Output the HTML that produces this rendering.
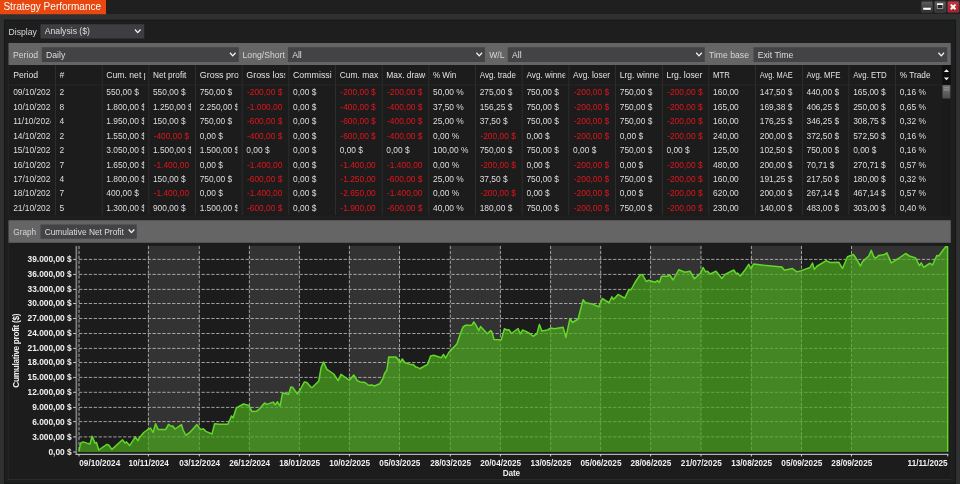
<!DOCTYPE html>
<html lang="en"><head><meta charset="utf-8"><title>Strategy Performance</title>
<style>
html,body{margin:0;padding:0}
body{width:960px;height:484px;overflow:hidden;background:#2f3031;font-family:"Liberation Sans",Arial,sans-serif;font-size:8.64px;color:#dcdcdc;position:relative}
div{position:absolute;box-sizing:border-box}
.titlebar{left:0;top:0;width:960px;height:13.9px;background:#1f1f1f}
.tab{left:0;top:0;width:106px;height:14.3px;background:#e8470f;color:#fff;font-size:10.05px;line-height:13.7px;padding-left:3.4px;white-space:nowrap}
.wb{top:1.1px;width:11.6px;height:11.4px;border-radius:1.5px;border:0.7px solid #565656;background:linear-gradient(#5c5c5c,#303030)}
.wb svg{position:absolute;left:-.7px;top:-.7px}
.panel{left:4px;top:19.8px;width:952px;height:464px;background:#1e1e1e;border:0.8px solid #141414}
.lbl{white-space:nowrap;color:#d6d6d6}
.sel{background:#434346;color:#dedede;white-space:nowrap;padding-left:4.2px}
.chev{position:absolute}
.grp{left:8.05px;width:943.1px;background:#1c1c1c;border-left:.7px solid #2b2b2b;border-right:.7px solid #2b2b2b}
.bar{left:0;top:0;width:100%;background:#656565}
.thead{left:0;top:0;width:933.4px;height:20.2px;border-bottom:0.7px solid #303030}
.th,.td{top:0;height:100%;overflow:hidden;white-space:nowrap;border-right:0.8px solid #333}
.th span,.td span{position:absolute;left:3.8px;right:4.2px;top:0;overflow:hidden;white-space:nowrap}
.c0 span{left:4.6px}
.th i{display:inline-block;font-style:normal;transform-origin:0 50%;white-space:nowrap}
.neg span{padding-left:.7px}
.th{line-height:20.4px;color:#e2e2e2}
.th span{height:19px;right:3.2px}
.tr{left:0;width:933.4px;height:14.42px;line-height:14.6px;color:#dedede;font-size:8.38px}
.td span{height:14.4px}
.neg{color:#e2151b}
.chart{position:absolute;left:0;top:0}
.g{stroke:#d4d4d4;stroke-width:.72;stroke-dasharray:3.3 1.6}
.al{font-family:"Liberation Sans",Arial,sans-serif;font-weight:bold;font-size:8.18px;fill:#f0f0f0}
.at{font-family:"Liberation Sans",Arial,sans-serif;font-weight:bold;font-size:8.2px;fill:#ececec}
</style></head><body>
<div id="w" style="left:0;top:0;width:3840px;height:1936px;transform:scale(.25);transform-origin:0 0;filter:contrast(1)">
<div id="z" style="left:0;top:0;width:960px;height:484px;zoom:4">
<div class="titlebar"></div>
<div class="tab">Strategy Performance</div>
<div class="wb" style="left:921.2px"><svg width="12" height="11.4" viewBox="0 0 12 11.4"><rect x="2.2" y="6.7" width="7.6" height="2.1" fill="#fff"/></svg></div>
<div class="wb" style="left:934.4px;border-color:#6c6c6c"><svg width="12" height="11.4" viewBox="0 0 12 11.4"><rect x="3.1" y="3.6" width="5.4" height="4" fill="#262626" stroke="#a8a8a8" stroke-width=".8"/><rect x="2.7" y="2.3" width="6.2" height="1.6" fill="#fff"/></svg></div>
<div class="wb" style="left:947.6px;background:linear-gradient(#c43a44,#a81d27);border-color:#b8434c"><svg width="12" height="11.4" viewBox="0 0 12 11.4"><path d="M3.3 3.6 L8 8.3 M8 3.6 L3.3 8.3" stroke="#fff" stroke-width="2" fill="none"/></svg></div>
<div class="panel"></div>
<div class="lbl" style="left:8.5px;top:26.5px;line-height:10px">Display</div>
<div class="sel" style="background:#3e3e42;left:40.6px;top:24.3px;width:103.6px;height:14.2px;line-height:14px">Analysis ($)<svg class="chev" style="right:2.9px;top:4.5px" viewBox="0 0 12 8" width="7" height="4.9"><path d="M1.2 1.2 L6 6.4 L10.8 1.2" fill="none" stroke="#f2f2f2" stroke-width="2.3"/></svg></div>

<div class="grp" style="top:43.1px;height:172.8px">
 <div class="bar" style="height:21.9px">
  <div class="lbl" style="left:4.5px;top:6.6px;line-height:10px">Period</div>
  <div class="sel" style="left:33.3px;top:4.2px;width:196.8px;height:14.6px;line-height:15.6px">Daily<svg class="chev" style="right:2.3px;top:4.7px" viewBox="0 0 12 8" width="7" height="4.9"><path d="M1.2 1.2 L6 6.4 L10.8 1.2" fill="none" stroke="#f2f2f2" stroke-width="2.3"/></svg></div>
  <div class="lbl" style="left:234px;top:6.6px;line-height:10px">Long/Short</div>
  <div class="sel" style="left:279.4px;top:4.2px;width:197px;height:14.6px;line-height:15.6px">All<svg class="chev" style="right:2.3px;top:4.7px" viewBox="0 0 12 8" width="7" height="4.9"><path d="M1.2 1.2 L6 6.4 L10.8 1.2" fill="none" stroke="#f2f2f2" stroke-width="2.3"/></svg></div>
  <div class="lbl" style="left:480.6px;top:6.6px;line-height:10px">W/L</div>
  <div class="sel" style="left:499.3px;top:4.2px;width:197px;height:14.6px;line-height:15.6px">All<svg class="chev" style="right:2.3px;top:4.7px" viewBox="0 0 12 8" width="7" height="4.9"><path d="M1.2 1.2 L6 6.4 L10.8 1.2" fill="none" stroke="#f2f2f2" stroke-width="2.3"/></svg></div>
  <div class="lbl" style="left:700.4px;top:6.6px;line-height:10px">Time base</div>
  <div class="sel" style="left:745px;top:4.2px;width:193.6px;height:14.6px;line-height:15.6px">Exit Time<svg class="chev" style="right:2.3px;top:4.7px" viewBox="0 0 12 8" width="7" height="4.9"><path d="M1.2 1.2 L6 6.4 L10.8 1.2" fill="none" stroke="#f2f2f2" stroke-width="2.3"/></svg></div>
 </div>
 <div style="left:0;top:21.9px;width:100%;height:150.9px;overflow:hidden">
<div class="thead">
<div class="th c0" style="left:0px;width:47.25px"><span>Period</span></div>
<div class="th" style="left:47.25px;width:46.68px"><span>#</span></div>
<div class="th" style="left:93.93px;width:46.68px"><span>Cum. net profit</span></div>
<div class="th" style="left:140.61px;width:46.68px"><span><i style="transform:scaleX(0.95)">Net profit</i></span></div>
<div class="th" style="left:187.29px;width:46.68px"><span><i style="transform:scaleX(1.035)">Gross profit</i></span></div>
<div class="th" style="left:233.97px;width:46.68px"><span><i style="transform:scaleX(1.03)">Gross loss</i></span></div>
<div class="th" style="left:280.65px;width:46.68px"><span><i style="transform:scaleX(1.02)">Commission</i></span></div>
<div class="th" style="left:327.33px;width:46.68px"><span><i style="transform:scaleX(0.975)">Cum. max. drawdown</i></span></div>
<div class="th" style="left:374.01px;width:46.68px"><span><i style="transform:scaleX(0.975)">Max. drawdown</i></span></div>
<div class="th" style="left:420.69px;width:46.68px"><span><i style="transform:scaleX(0.93)">% Win</i></span></div>
<div class="th" style="left:467.37px;width:46.68px"><span><i style="transform:scaleX(0.92)">Avg. trade</i></span></div>
<div class="th" style="left:514.05px;width:46.68px"><span><i style="transform:scaleX(0.95)">Avg. winner</i></span></div>
<div class="th" style="left:560.73px;width:46.68px"><span><i style="transform:scaleX(0.97)">Avg. loser</i></span></div>
<div class="th" style="left:607.41px;width:46.68px"><span><i style="transform:scaleX(0.99)">Lrg. winner</i></span></div>
<div class="th" style="left:654.09px;width:46.68px"><span>Lrg. loser</span></div>
<div class="th" style="left:700.77px;width:46.68px"><span><i style="transform:scaleX(0.9)">MTR</i></span></div>
<div class="th" style="left:747.45px;width:46.68px"><span><i style="transform:scaleX(0.86)">Avg. MAE</i></span></div>
<div class="th" style="left:794.13px;width:46.68px"><span><i style="transform:scaleX(0.9)">Avg. MFE</i></span></div>
<div class="th" style="left:840.81px;width:46.68px"><span><i style="transform:scaleX(0.91)">Avg. ETD</i></span></div>
<div class="th" style="left:887.49px;width:46.68px"><span><i style="transform:scaleX(0.955)">% Trade</i></span></div>
</div>
<div class="tr" style="top:20.3px">
<div class="td c0" style="left:0px;width:47.25px"><span>09/10/2024</span></div>
<div class="td" style="left:47.25px;width:46.68px"><span>2</span></div>
<div class="td" style="left:93.93px;width:46.68px"><span>550,00 $</span></div>
<div class="td" style="left:140.61px;width:46.68px"><span>550,00 $</span></div>
<div class="td" style="left:187.29px;width:46.68px"><span>750,00 $</span></div>
<div class="td neg" style="left:233.97px;width:46.68px"><span>-200,00 $</span></div>
<div class="td" style="left:280.65px;width:46.68px"><span>0,00 $</span></div>
<div class="td neg" style="left:327.33px;width:46.68px"><span>-200,00 $</span></div>
<div class="td neg" style="left:374.01px;width:46.68px"><span>-200,00 $</span></div>
<div class="td" style="left:420.69px;width:46.68px"><span>50,00 %</span></div>
<div class="td" style="left:467.37px;width:46.68px"><span>275,00 $</span></div>
<div class="td" style="left:514.05px;width:46.68px"><span>750,00 $</span></div>
<div class="td neg" style="left:560.73px;width:46.68px"><span>-200,00 $</span></div>
<div class="td" style="left:607.41px;width:46.68px"><span>750,00 $</span></div>
<div class="td neg" style="left:654.09px;width:46.68px"><span>-200,00 $</span></div>
<div class="td" style="left:700.77px;width:46.68px"><span>160,00</span></div>
<div class="td" style="left:747.45px;width:46.68px"><span>147,50 $</span></div>
<div class="td" style="left:794.13px;width:46.68px"><span>440,00 $</span></div>
<div class="td" style="left:840.81px;width:46.68px"><span>165,00 $</span></div>
<div class="td" style="left:887.49px;width:46.68px"><span>0,16 %</span></div>
</div>
<div class="tr" style="top:34.72px">
<div class="td c0" style="left:0px;width:47.25px"><span>10/10/2024</span></div>
<div class="td" style="left:47.25px;width:46.68px"><span>8</span></div>
<div class="td" style="left:93.93px;width:46.68px"><span>1.800,00 $</span></div>
<div class="td" style="left:140.61px;width:46.68px"><span>1.250,00 $</span></div>
<div class="td" style="left:187.29px;width:46.68px"><span>2.250,00 $</span></div>
<div class="td neg" style="left:233.97px;width:46.68px"><span>-1.000,00 $</span></div>
<div class="td" style="left:280.65px;width:46.68px"><span>0,00 $</span></div>
<div class="td neg" style="left:327.33px;width:46.68px"><span>-400,00 $</span></div>
<div class="td neg" style="left:374.01px;width:46.68px"><span>-400,00 $</span></div>
<div class="td" style="left:420.69px;width:46.68px"><span>37,50 %</span></div>
<div class="td" style="left:467.37px;width:46.68px"><span>156,25 $</span></div>
<div class="td" style="left:514.05px;width:46.68px"><span>750,00 $</span></div>
<div class="td neg" style="left:560.73px;width:46.68px"><span>-200,00 $</span></div>
<div class="td" style="left:607.41px;width:46.68px"><span>750,00 $</span></div>
<div class="td neg" style="left:654.09px;width:46.68px"><span>-200,00 $</span></div>
<div class="td" style="left:700.77px;width:46.68px"><span>165,00</span></div>
<div class="td" style="left:747.45px;width:46.68px"><span>169,38 $</span></div>
<div class="td" style="left:794.13px;width:46.68px"><span>406,25 $</span></div>
<div class="td" style="left:840.81px;width:46.68px"><span>250,00 $</span></div>
<div class="td" style="left:887.49px;width:46.68px"><span>0,65 %</span></div>
</div>
<div class="tr" style="top:49.14px">
<div class="td c0" style="left:0px;width:47.25px"><span>11/10/2024</span></div>
<div class="td" style="left:47.25px;width:46.68px"><span>4</span></div>
<div class="td" style="left:93.93px;width:46.68px"><span>1.950,00 $</span></div>
<div class="td" style="left:140.61px;width:46.68px"><span>150,00 $</span></div>
<div class="td" style="left:187.29px;width:46.68px"><span>750,00 $</span></div>
<div class="td neg" style="left:233.97px;width:46.68px"><span>-600,00 $</span></div>
<div class="td" style="left:280.65px;width:46.68px"><span>0,00 $</span></div>
<div class="td neg" style="left:327.33px;width:46.68px"><span>-600,00 $</span></div>
<div class="td neg" style="left:374.01px;width:46.68px"><span>-400,00 $</span></div>
<div class="td" style="left:420.69px;width:46.68px"><span>25,00 %</span></div>
<div class="td" style="left:467.37px;width:46.68px"><span>37,50 $</span></div>
<div class="td" style="left:514.05px;width:46.68px"><span>750,00 $</span></div>
<div class="td neg" style="left:560.73px;width:46.68px"><span>-200,00 $</span></div>
<div class="td" style="left:607.41px;width:46.68px"><span>750,00 $</span></div>
<div class="td neg" style="left:654.09px;width:46.68px"><span>-200,00 $</span></div>
<div class="td" style="left:700.77px;width:46.68px"><span>160,00</span></div>
<div class="td" style="left:747.45px;width:46.68px"><span>176,25 $</span></div>
<div class="td" style="left:794.13px;width:46.68px"><span>346,25 $</span></div>
<div class="td" style="left:840.81px;width:46.68px"><span>308,75 $</span></div>
<div class="td" style="left:887.49px;width:46.68px"><span>0,32 %</span></div>
</div>
<div class="tr" style="top:63.56px">
<div class="td c0" style="left:0px;width:47.25px"><span>14/10/2024</span></div>
<div class="td" style="left:47.25px;width:46.68px"><span>2</span></div>
<div class="td" style="left:93.93px;width:46.68px"><span>1.550,00 $</span></div>
<div class="td neg" style="left:140.61px;width:46.68px"><span>-400,00 $</span></div>
<div class="td" style="left:187.29px;width:46.68px"><span>0,00 $</span></div>
<div class="td neg" style="left:233.97px;width:46.68px"><span>-400,00 $</span></div>
<div class="td" style="left:280.65px;width:46.68px"><span>0,00 $</span></div>
<div class="td neg" style="left:327.33px;width:46.68px"><span>-600,00 $</span></div>
<div class="td neg" style="left:374.01px;width:46.68px"><span>-400,00 $</span></div>
<div class="td" style="left:420.69px;width:46.68px"><span>0,00 %</span></div>
<div class="td neg" style="left:467.37px;width:46.68px"><span>-200,00 $</span></div>
<div class="td" style="left:514.05px;width:46.68px"><span>0,00 $</span></div>
<div class="td neg" style="left:560.73px;width:46.68px"><span>-200,00 $</span></div>
<div class="td" style="left:607.41px;width:46.68px"><span>0,00 $</span></div>
<div class="td neg" style="left:654.09px;width:46.68px"><span>-200,00 $</span></div>
<div class="td" style="left:700.77px;width:46.68px"><span>240,00</span></div>
<div class="td" style="left:747.45px;width:46.68px"><span>200,00 $</span></div>
<div class="td" style="left:794.13px;width:46.68px"><span>372,50 $</span></div>
<div class="td" style="left:840.81px;width:46.68px"><span>572,50 $</span></div>
<div class="td" style="left:887.49px;width:46.68px"><span>0,16 %</span></div>
</div>
<div class="tr" style="top:77.98px">
<div class="td c0" style="left:0px;width:47.25px"><span>15/10/2024</span></div>
<div class="td" style="left:47.25px;width:46.68px"><span>2</span></div>
<div class="td" style="left:93.93px;width:46.68px"><span>3.050,00 $</span></div>
<div class="td" style="left:140.61px;width:46.68px"><span>1.500,00 $</span></div>
<div class="td" style="left:187.29px;width:46.68px"><span>1.500,00 $</span></div>
<div class="td" style="left:233.97px;width:46.68px"><span>0,00 $</span></div>
<div class="td" style="left:280.65px;width:46.68px"><span>0,00 $</span></div>
<div class="td" style="left:327.33px;width:46.68px"><span>0,00 $</span></div>
<div class="td" style="left:374.01px;width:46.68px"><span>0,00 $</span></div>
<div class="td" style="left:420.69px;width:46.68px"><span>100,00 %</span></div>
<div class="td" style="left:467.37px;width:46.68px"><span>750,00 $</span></div>
<div class="td" style="left:514.05px;width:46.68px"><span>750,00 $</span></div>
<div class="td" style="left:560.73px;width:46.68px"><span>0,00 $</span></div>
<div class="td" style="left:607.41px;width:46.68px"><span>750,00 $</span></div>
<div class="td" style="left:654.09px;width:46.68px"><span>0,00 $</span></div>
<div class="td" style="left:700.77px;width:46.68px"><span>125,00</span></div>
<div class="td" style="left:747.45px;width:46.68px"><span>102,50 $</span></div>
<div class="td" style="left:794.13px;width:46.68px"><span>750,00 $</span></div>
<div class="td" style="left:840.81px;width:46.68px"><span>0,00 $</span></div>
<div class="td" style="left:887.49px;width:46.68px"><span>0,16 %</span></div>
</div>
<div class="tr" style="top:92.4px">
<div class="td c0" style="left:0px;width:47.25px"><span>16/10/2024</span></div>
<div class="td" style="left:47.25px;width:46.68px"><span>7</span></div>
<div class="td" style="left:93.93px;width:46.68px"><span>1.650,00 $</span></div>
<div class="td neg" style="left:140.61px;width:46.68px"><span>-1.400,00 $</span></div>
<div class="td" style="left:187.29px;width:46.68px"><span>0,00 $</span></div>
<div class="td neg" style="left:233.97px;width:46.68px"><span>-1.400,00 $</span></div>
<div class="td" style="left:280.65px;width:46.68px"><span>0,00 $</span></div>
<div class="td neg" style="left:327.33px;width:46.68px"><span>-1.400,00 $</span></div>
<div class="td neg" style="left:374.01px;width:46.68px"><span>-1.400,00 $</span></div>
<div class="td" style="left:420.69px;width:46.68px"><span>0,00 %</span></div>
<div class="td neg" style="left:467.37px;width:46.68px"><span>-200,00 $</span></div>
<div class="td" style="left:514.05px;width:46.68px"><span>0,00 $</span></div>
<div class="td neg" style="left:560.73px;width:46.68px"><span>-200,00 $</span></div>
<div class="td" style="left:607.41px;width:46.68px"><span>0,00 $</span></div>
<div class="td neg" style="left:654.09px;width:46.68px"><span>-200,00 $</span></div>
<div class="td" style="left:700.77px;width:46.68px"><span>480,00</span></div>
<div class="td" style="left:747.45px;width:46.68px"><span>200,00 $</span></div>
<div class="td" style="left:794.13px;width:46.68px"><span>70,71 $</span></div>
<div class="td" style="left:840.81px;width:46.68px"><span>270,71 $</span></div>
<div class="td" style="left:887.49px;width:46.68px"><span>0,57 %</span></div>
</div>
<div class="tr" style="top:106.82px">
<div class="td c0" style="left:0px;width:47.25px"><span>17/10/2024</span></div>
<div class="td" style="left:47.25px;width:46.68px"><span>4</span></div>
<div class="td" style="left:93.93px;width:46.68px"><span>1.800,00 $</span></div>
<div class="td" style="left:140.61px;width:46.68px"><span>150,00 $</span></div>
<div class="td" style="left:187.29px;width:46.68px"><span>750,00 $</span></div>
<div class="td neg" style="left:233.97px;width:46.68px"><span>-600,00 $</span></div>
<div class="td" style="left:280.65px;width:46.68px"><span>0,00 $</span></div>
<div class="td neg" style="left:327.33px;width:46.68px"><span>-1.250,00 $</span></div>
<div class="td neg" style="left:374.01px;width:46.68px"><span>-600,00 $</span></div>
<div class="td" style="left:420.69px;width:46.68px"><span>25,00 %</span></div>
<div class="td" style="left:467.37px;width:46.68px"><span>37,50 $</span></div>
<div class="td" style="left:514.05px;width:46.68px"><span>750,00 $</span></div>
<div class="td neg" style="left:560.73px;width:46.68px"><span>-200,00 $</span></div>
<div class="td" style="left:607.41px;width:46.68px"><span>750,00 $</span></div>
<div class="td neg" style="left:654.09px;width:46.68px"><span>-200,00 $</span></div>
<div class="td" style="left:700.77px;width:46.68px"><span>160,00</span></div>
<div class="td" style="left:747.45px;width:46.68px"><span>191,25 $</span></div>
<div class="td" style="left:794.13px;width:46.68px"><span>217,50 $</span></div>
<div class="td" style="left:840.81px;width:46.68px"><span>180,00 $</span></div>
<div class="td" style="left:887.49px;width:46.68px"><span>0,32 %</span></div>
</div>
<div class="tr" style="top:121.24px">
<div class="td c0" style="left:0px;width:47.25px"><span>18/10/2024</span></div>
<div class="td" style="left:47.25px;width:46.68px"><span>7</span></div>
<div class="td" style="left:93.93px;width:46.68px"><span>400,00 $</span></div>
<div class="td neg" style="left:140.61px;width:46.68px"><span>-1.400,00 $</span></div>
<div class="td" style="left:187.29px;width:46.68px"><span>0,00 $</span></div>
<div class="td neg" style="left:233.97px;width:46.68px"><span>-1.400,00 $</span></div>
<div class="td" style="left:280.65px;width:46.68px"><span>0,00 $</span></div>
<div class="td neg" style="left:327.33px;width:46.68px"><span>-2.650,00 $</span></div>
<div class="td neg" style="left:374.01px;width:46.68px"><span>-1.400,00 $</span></div>
<div class="td" style="left:420.69px;width:46.68px"><span>0,00 %</span></div>
<div class="td neg" style="left:467.37px;width:46.68px"><span>-200,00 $</span></div>
<div class="td" style="left:514.05px;width:46.68px"><span>0,00 $</span></div>
<div class="td neg" style="left:560.73px;width:46.68px"><span>-200,00 $</span></div>
<div class="td" style="left:607.41px;width:46.68px"><span>0,00 $</span></div>
<div class="td neg" style="left:654.09px;width:46.68px"><span>-200,00 $</span></div>
<div class="td" style="left:700.77px;width:46.68px"><span>620,00</span></div>
<div class="td" style="left:747.45px;width:46.68px"><span>200,00 $</span></div>
<div class="td" style="left:794.13px;width:46.68px"><span>267,14 $</span></div>
<div class="td" style="left:840.81px;width:46.68px"><span>467,14 $</span></div>
<div class="td" style="left:887.49px;width:46.68px"><span>0,57 %</span></div>
</div>
<div class="tr" style="top:135.66px">
<div class="td c0" style="left:0px;width:47.25px"><span>21/10/2024</span></div>
<div class="td" style="left:47.25px;width:46.68px"><span>5</span></div>
<div class="td" style="left:93.93px;width:46.68px"><span>1.300,00 $</span></div>
<div class="td" style="left:140.61px;width:46.68px"><span>900,00 $</span></div>
<div class="td" style="left:187.29px;width:46.68px"><span>1.500,00 $</span></div>
<div class="td neg" style="left:233.97px;width:46.68px"><span>-600,00 $</span></div>
<div class="td" style="left:280.65px;width:46.68px"><span>0,00 $</span></div>
<div class="td neg" style="left:327.33px;width:46.68px"><span>-1.900,00 $</span></div>
<div class="td neg" style="left:374.01px;width:46.68px"><span>-600,00 $</span></div>
<div class="td" style="left:420.69px;width:46.68px"><span>40,00 %</span></div>
<div class="td" style="left:467.37px;width:46.68px"><span>180,00 $</span></div>
<div class="td" style="left:514.05px;width:46.68px"><span>750,00 $</span></div>
<div class="td neg" style="left:560.73px;width:46.68px"><span>-200,00 $</span></div>
<div class="td" style="left:607.41px;width:46.68px"><span>750,00 $</span></div>
<div class="td neg" style="left:654.09px;width:46.68px"><span>-200,00 $</span></div>
<div class="td" style="left:700.77px;width:46.68px"><span>230,00</span></div>
<div class="td" style="left:747.45px;width:46.68px"><span>140,00 $</span></div>
<div class="td" style="left:794.13px;width:46.68px"><span>483,00 $</span></div>
<div class="td" style="left:840.81px;width:46.68px"><span>303,00 $</span></div>
<div class="td" style="left:887.49px;width:46.68px"><span>0,40 %</span></div>
</div>
  <div style="left:933.4px;top:0;width:9px;height:150.9px;background:#1a1a1a"></div>
  <div style="left:933.4px;top:0;width:9px;height:19.4px;background:#0f0f0f"><svg width="9" height="19.4" viewBox="0 0 9 19.4" style="position:absolute;left:0;top:0"><path d="M1.9 7 L4.5 4.3 L7.1 7 Z M1.9 12.4 L4.5 15.2 L7.1 12.4 Z" fill="#f4f4f4"/></svg></div>
  <div style="left:933.9px;top:20.3px;width:8px;height:13.3px;background:linear-gradient(#747474,#4e4e4e);border-top:0.7px solid #999"><div style="left:1.2px;top:1.6px;width:5.6px;height:.6px;background:#a5a5a5"></div><div style="left:1.2px;top:3px;width:5.6px;height:.6px;background:#a0a0a0"></div><div style="left:1.2px;top:4.4px;width:5.6px;height:.6px;background:#989898"></div></div>
 </div>
</div>

<div class="grp" style="top:220.2px;height:259.8px;border-bottom:0.7px solid #3a3a3a">
 <div class="bar" style="height:22.5px">
  <div class="lbl" style="left:4.7px;top:6.9px;line-height:10px;font-size:8.25px">Graph</div>
  <div class="sel" style="left:31.9px;top:4.2px;width:96.4px;height:14.3px;line-height:15.4px;font-size:8.38px">Cumulative Net Profit<svg class="chev" style="right:1.9px;top:4.4px" viewBox="0 0 12 8" width="7" height="4.9"><path d="M1.2 1.2 L6 6.4 L10.8 1.2" fill="none" stroke="#f2f2f2" stroke-width="2.3"/></svg></div>
 </div>
</div>
</div>
<svg class="chart" width="3840" height="1936" viewBox="0 0 960 484">
<defs><clipPath id="pc"><rect x="79" y="245.9" width="869.7" height="206.4"/></clipPath></defs>
<rect x="148.4" y="245.9" width="50.9" height="205.8" fill="#333333"/>
<rect x="249.4" y="245.9" width="50" height="205.8" fill="#333333"/>
<rect x="349.4" y="245.9" width="50.1" height="205.8" fill="#333333"/>
<rect x="450.3" y="245.9" width="50.1" height="205.8" fill="#333333"/>
<rect x="550.6" y="245.9" width="50.1" height="205.8" fill="#333333"/>
<rect x="650.6" y="245.9" width="50.4" height="205.8" fill="#333333"/>
<rect x="751.4" y="245.9" width="50.1" height="205.8" fill="#333333"/>
<rect x="851.5" y="245.9" width="96.2" height="205.8" fill="#333333"/>
<line x1="79" x2="947.7" y1="436.9" y2="436.9" class="g"/>
<line x1="79" x2="947.7" y1="421.6" y2="421.6" class="g"/>
<line x1="79" x2="947.7" y1="407.4" y2="407.4" class="g"/>
<line x1="79" x2="947.7" y1="392.3" y2="392.3" class="g"/>
<line x1="79" x2="947.7" y1="377.4" y2="377.4" class="g"/>
<line x1="79" x2="947.7" y1="362.5" y2="362.5" class="g"/>
<line x1="79" x2="947.7" y1="348.4" y2="348.4" class="g"/>
<line x1="79" x2="947.7" y1="333.5" y2="333.5" class="g"/>
<line x1="79" x2="947.7" y1="318.5" y2="318.5" class="g"/>
<line x1="79" x2="947.7" y1="303.5" y2="303.5" class="g"/>
<line x1="79" x2="947.7" y1="289.4" y2="289.4" class="g"/>
<line x1="79" x2="947.7" y1="274.4" y2="274.4" class="g"/>
<line x1="79" x2="947.7" y1="259.4" y2="259.4" class="g"/>
<line x1="79" x2="79" y1="245.9" y2="451.7" class="g" style="stroke:#e4e4e4"/>
<line x1="148.4" x2="148.4" y1="245.9" y2="451.7" class="g"/>
<line x1="199.3" x2="199.3" y1="245.9" y2="451.7" class="g"/>
<line x1="249.4" x2="249.4" y1="245.9" y2="451.7" class="g"/>
<line x1="299.4" x2="299.4" y1="245.9" y2="451.7" class="g"/>
<line x1="349.4" x2="349.4" y1="245.9" y2="451.7" class="g"/>
<line x1="399.5" x2="399.5" y1="245.9" y2="451.7" class="g"/>
<line x1="450.3" x2="450.3" y1="245.9" y2="451.7" class="g"/>
<line x1="500.4" x2="500.4" y1="245.9" y2="451.7" class="g"/>
<line x1="550.6" x2="550.6" y1="245.9" y2="451.7" class="g"/>
<line x1="600.7" x2="600.7" y1="245.9" y2="451.7" class="g"/>
<line x1="650.6" x2="650.6" y1="245.9" y2="451.7" class="g"/>
<line x1="701" x2="701" y1="245.9" y2="451.7" class="g"/>
<line x1="751.4" x2="751.4" y1="245.9" y2="451.7" class="g"/>
<line x1="801.5" x2="801.5" y1="245.9" y2="451.7" class="g"/>
<line x1="851.5" x2="851.5" y1="245.9" y2="451.7" class="g"/>
<path d="M78.8 451.6 L80.6 443.1 L83.1 441.9 L86.9 443.1 L90 444 L92.1 436.25 L95 443.1 L96.5 442.5 L98.75 450 L106.9 444.4 L108.75 445 L111.9 449.4 L122.5 439.75 L125 443.1 L126.5 441.9 L129.6 445.6 L135.4 436.9 L137.9 440.6 L140 436.9 L143.75 432.5 L147.5 429.75 L150.6 428.1 L153.1 432.5 L155.6 423.75 L158.1 429.4 L165.6 429.6 L168.5 424.4 L171.25 426.25 L172.75 426 L175 429 L181.5 424.6 L183.1 430 L186 435.4 L190 432.2 L196.9 424.6 L200.8 429.6 L203.3 428.8 L205.9 431.4 L212 434 L214.6 423.8 L219.6 424.2 L227.9 424.2 L231.5 416 L233.1 417.7 L236.3 407.9 L243.5 404 L249 405.4 L251.9 411.6 L256.5 411.2 L259.1 409.3 L264.5 403 L266.9 404.4 L273.1 402.1 L275.3 404.7 L277.5 401.8 L280.1 406.1 L282.5 393.1 L288.6 394.3 L290.9 387.1 L292.9 387.6 L297.3 393.9 L300 390 L304.4 381.9 L306.9 382.5 L311.25 387.5 L312.5 387.25 L318.75 381 L321 368.1 L323.4 361.9 L326.9 369.4 L333.75 374 L338.1 380.6 L341 374.4 L349.4 380.25 L353.75 375 L357.25 380.6 L360 381.9 L365 382.5 L368.5 385.25 L371.9 385 L374.4 386 L379.75 383.75 L382.5 379.4 L384.75 373.1 L386.9 370 L388.75 356.9 L395.6 356.9 L398.1 359.4 L400 362.75 L402.25 359 L404.75 362.5 L410 364.4 L413.1 364.4 L415.6 366.9 L417.5 367.25 L419.75 368.75 L427.5 364.4 L430.6 356 L433.75 355.25 L441.25 357.75 L443.5 354.4 L445.6 358.1 L448.75 352.5 L456.9 344 L460.6 333.1 L463.1 326.9 L465.6 325.25 L471.9 325.25 L473.75 321.9 L476.25 325.6 L478.75 330.6 L480.6 326.5 L487.25 333.75 L490.6 330.6 L491.9 331.9 L494 339.4 L501.25 339.75 L504.4 328.75 L506.9 330 L509 329.75 L511.5 333.5 L518.1 328.5 L520.25 334 L522.5 330 L526.9 331.9 L530 333.75 L533.1 336.25 L536.9 333.75 L539.4 324.4 L541.9 331 L547.5 330 L550.6 328.1 L554.4 328.75 L563.1 327.25 L565.9 337.5 L570 318.5 L572.5 322.5 L578.1 319 L583.1 299.75 L585.6 302.75 L592.5 304 L598.75 306.9 L602.25 298.5 L609 302.75 L611.9 296.9 L613.5 299.4 L618.1 294.4 L624.75 298.1 L629 289.4 L631 289.75 L635 282.5 L640 275 L642.25 274.4 L646.25 281.5 L648.75 280.25 L655 282.25 L657.5 280.6 L659.4 282.5 L661.5 276.25 L667.5 276.25 L669.75 275 L673.1 280 L678.75 269.75 L685 272.25 L690 271.25 L694.4 278.75 L700.6 273.1 L703.1 267.5 L705.6 271.9 L707.5 271.25 L710 274 L716 271.25 L721.9 278.5 L725 274.4 L733.75 270 L736.25 273.75 L737.5 273.1 L740.25 276 L745 270 L748.75 264.4 L751 269 L753.5 264 L763.75 265.25 L781.9 266.9 L784.4 270.25 L792.5 268.5 L796.9 271.9 L801.25 270.6 L810 267.5 L812.5 263.1 L814.4 269.4 L816.9 266.25 L826.25 260.6 L830 262.5 L838.75 262.25 L842.5 268.5 L847.5 256.8 L853.4 254.5 L855.5 257.5 L860.5 266 L862.5 261.6 L868.75 256 L871.25 250.4 L873.75 256.6 L875.6 258.25 L878.75 255.4 L884.4 254.5 L886.9 252.9 L891.25 262.9 L898.75 258.25 L905.6 253.5 L909.4 256 L915.6 257.9 L919.4 265.75 L921.25 262.9 L923.75 267.25 L930 263.25 L932.5 265 L936.9 255.4 L938.75 256 L945.6 246.8 L947.6 246.8 L947.7 452.1 L78.8 452.1 Z" fill="#4daa1e" fill-opacity="0.7"/>
<path d="M78.8 451.6 L80.6 443.1 L83.1 441.9 L86.9 443.1 L90 444 L92.1 436.25 L95 443.1 L96.5 442.5 L98.75 450 L106.9 444.4 L108.75 445 L111.9 449.4 L122.5 439.75 L125 443.1 L126.5 441.9 L129.6 445.6 L135.4 436.9 L137.9 440.6 L140 436.9 L143.75 432.5 L147.5 429.75 L150.6 428.1 L153.1 432.5 L155.6 423.75 L158.1 429.4 L165.6 429.6 L168.5 424.4 L171.25 426.25 L172.75 426 L175 429 L181.5 424.6 L183.1 430 L186 435.4 L190 432.2 L196.9 424.6 L200.8 429.6 L203.3 428.8 L205.9 431.4 L212 434 L214.6 423.8 L219.6 424.2 L227.9 424.2 L231.5 416 L233.1 417.7 L236.3 407.9 L243.5 404 L249 405.4 L251.9 411.6 L256.5 411.2 L259.1 409.3 L264.5 403 L266.9 404.4 L273.1 402.1 L275.3 404.7 L277.5 401.8 L280.1 406.1 L282.5 393.1 L288.6 394.3 L290.9 387.1 L292.9 387.6 L297.3 393.9 L300 390 L304.4 381.9 L306.9 382.5 L311.25 387.5 L312.5 387.25 L318.75 381 L321 368.1 L323.4 361.9 L326.9 369.4 L333.75 374 L338.1 380.6 L341 374.4 L349.4 380.25 L353.75 375 L357.25 380.6 L360 381.9 L365 382.5 L368.5 385.25 L371.9 385 L374.4 386 L379.75 383.75 L382.5 379.4 L384.75 373.1 L386.9 370 L388.75 356.9 L395.6 356.9 L398.1 359.4 L400 362.75 L402.25 359 L404.75 362.5 L410 364.4 L413.1 364.4 L415.6 366.9 L417.5 367.25 L419.75 368.75 L427.5 364.4 L430.6 356 L433.75 355.25 L441.25 357.75 L443.5 354.4 L445.6 358.1 L448.75 352.5 L456.9 344 L460.6 333.1 L463.1 326.9 L465.6 325.25 L471.9 325.25 L473.75 321.9 L476.25 325.6 L478.75 330.6 L480.6 326.5 L487.25 333.75 L490.6 330.6 L491.9 331.9 L494 339.4 L501.25 339.75 L504.4 328.75 L506.9 330 L509 329.75 L511.5 333.5 L518.1 328.5 L520.25 334 L522.5 330 L526.9 331.9 L530 333.75 L533.1 336.25 L536.9 333.75 L539.4 324.4 L541.9 331 L547.5 330 L550.6 328.1 L554.4 328.75 L563.1 327.25 L565.9 337.5 L570 318.5 L572.5 322.5 L578.1 319 L583.1 299.75 L585.6 302.75 L592.5 304 L598.75 306.9 L602.25 298.5 L609 302.75 L611.9 296.9 L613.5 299.4 L618.1 294.4 L624.75 298.1 L629 289.4 L631 289.75 L635 282.5 L640 275 L642.25 274.4 L646.25 281.5 L648.75 280.25 L655 282.25 L657.5 280.6 L659.4 282.5 L661.5 276.25 L667.5 276.25 L669.75 275 L673.1 280 L678.75 269.75 L685 272.25 L690 271.25 L694.4 278.75 L700.6 273.1 L703.1 267.5 L705.6 271.9 L707.5 271.25 L710 274 L716 271.25 L721.9 278.5 L725 274.4 L733.75 270 L736.25 273.75 L737.5 273.1 L740.25 276 L745 270 L748.75 264.4 L751 269 L753.5 264 L763.75 265.25 L781.9 266.9 L784.4 270.25 L792.5 268.5 L796.9 271.9 L801.25 270.6 L810 267.5 L812.5 263.1 L814.4 269.4 L816.9 266.25 L826.25 260.6 L830 262.5 L838.75 262.25 L842.5 268.5 L847.5 256.8 L853.4 254.5 L855.5 257.5 L860.5 266 L862.5 261.6 L868.75 256 L871.25 250.4 L873.75 256.6 L875.6 258.25 L878.75 255.4 L884.4 254.5 L886.9 252.9 L891.25 262.9 L898.75 258.25 L905.6 253.5 L909.4 256 L915.6 257.9 L919.4 265.75 L921.25 262.9 L923.75 267.25 L930 263.25 L932.5 265 L936.9 255.4 L938.75 256 L945.6 246.8 L947.6 246.8 L947.7 451.7" fill="none" stroke="#62d728" stroke-width="1.5" stroke-linejoin="round"/>
<rect x="75.5" y="245.9" width="1.7" height="208.8" fill="#7e7e7e"/>
<rect x="75.5" y="453.8" width="872.8" height="1.1" fill="#c2c2c2"/>
<rect x="73.2" y="451.5" width="2.6" height="1" fill="#cfcfcf"/>
<rect x="73.2" y="436.4" width="2.6" height="1" fill="#cfcfcf"/>
<rect x="73.2" y="421.1" width="2.6" height="1" fill="#cfcfcf"/>
<rect x="73.2" y="406.9" width="2.6" height="1" fill="#cfcfcf"/>
<rect x="73.2" y="391.8" width="2.6" height="1" fill="#cfcfcf"/>
<rect x="73.2" y="376.9" width="2.6" height="1" fill="#cfcfcf"/>
<rect x="73.2" y="362" width="2.6" height="1" fill="#cfcfcf"/>
<rect x="73.2" y="347.9" width="2.6" height="1" fill="#cfcfcf"/>
<rect x="73.2" y="333" width="2.6" height="1" fill="#cfcfcf"/>
<rect x="73.2" y="318" width="2.6" height="1" fill="#cfcfcf"/>
<rect x="73.2" y="303" width="2.6" height="1" fill="#cfcfcf"/>
<rect x="73.2" y="288.9" width="2.6" height="1" fill="#cfcfcf"/>
<rect x="73.2" y="273.9" width="2.6" height="1" fill="#cfcfcf"/>
<rect x="73.2" y="258.9" width="2.6" height="1" fill="#cfcfcf"/>
<rect x="78.5" y="454" width="1" height="2.4" fill="#cfcfcf"/>
<rect x="147.9" y="454" width="1" height="2.4" fill="#cfcfcf"/>
<rect x="198.8" y="454" width="1" height="2.4" fill="#cfcfcf"/>
<rect x="248.9" y="454" width="1" height="2.4" fill="#cfcfcf"/>
<rect x="298.9" y="454" width="1" height="2.4" fill="#cfcfcf"/>
<rect x="348.9" y="454" width="1" height="2.4" fill="#cfcfcf"/>
<rect x="399" y="454" width="1" height="2.4" fill="#cfcfcf"/>
<rect x="449.8" y="454" width="1" height="2.4" fill="#cfcfcf"/>
<rect x="499.9" y="454" width="1" height="2.4" fill="#cfcfcf"/>
<rect x="550.1" y="454" width="1" height="2.4" fill="#cfcfcf"/>
<rect x="600.2" y="454" width="1" height="2.4" fill="#cfcfcf"/>
<rect x="650.1" y="454" width="1" height="2.4" fill="#cfcfcf"/>
<rect x="700.5" y="454" width="1" height="2.4" fill="#cfcfcf"/>
<rect x="750.9" y="454" width="1" height="2.4" fill="#cfcfcf"/>
<rect x="801" y="454" width="1" height="2.4" fill="#cfcfcf"/>
<rect x="851" y="454" width="1" height="2.4" fill="#cfcfcf"/>
<rect x="947.2" y="454" width="1" height="2.4" fill="#cfcfcf"/>
<text x="71.7" y="454.95" text-anchor="end" class="al" style="font-size:8.37px">0,00 $</text>
<text x="71.7" y="439.85" text-anchor="end" class="al" style="font-size:8.37px">3.000,00 $</text>
<text x="71.7" y="424.55" text-anchor="end" class="al" style="font-size:8.37px">6.000,00 $</text>
<text x="71.7" y="410.35" text-anchor="end" class="al" style="font-size:8.37px">9.000,00 $</text>
<text x="71.7" y="395.25" text-anchor="end" class="al" style="font-size:8.37px">12.000,00 $</text>
<text x="71.7" y="380.35" text-anchor="end" class="al" style="font-size:8.37px">15.000,00 $</text>
<text x="71.7" y="365.45" text-anchor="end" class="al" style="font-size:8.37px">18.000,00 $</text>
<text x="71.7" y="351.35" text-anchor="end" class="al" style="font-size:8.37px">21.000,00 $</text>
<text x="71.7" y="336.45" text-anchor="end" class="al" style="font-size:8.37px">24.000,00 $</text>
<text x="71.7" y="321.45" text-anchor="end" class="al" style="font-size:8.37px">27.000,00 $</text>
<text x="71.7" y="306.45" text-anchor="end" class="al" style="font-size:8.37px">30.000,00 $</text>
<text x="71.7" y="292.35" text-anchor="end" class="al" style="font-size:8.37px">33.000,00 $</text>
<text x="71.7" y="277.35" text-anchor="end" class="al" style="font-size:8.37px">36.000,00 $</text>
<text x="71.7" y="262.35" text-anchor="end" class="al" style="font-size:8.37px">39.000,00 $</text>
<text x="79.3" y="466.2" class="al">09/10/2024</text>
<text x="148.7" y="466.2" text-anchor="middle" class="al">10/11/2024</text>
<text x="199.6" y="466.2" text-anchor="middle" class="al">03/12/2024</text>
<text x="249.7" y="466.2" text-anchor="middle" class="al">26/12/2024</text>
<text x="299.7" y="466.2" text-anchor="middle" class="al">18/01/2025</text>
<text x="349.7" y="466.2" text-anchor="middle" class="al">10/02/2025</text>
<text x="399.8" y="466.2" text-anchor="middle" class="al">05/03/2025</text>
<text x="450.6" y="466.2" text-anchor="middle" class="al">28/03/2025</text>
<text x="500.7" y="466.2" text-anchor="middle" class="al">20/04/2025</text>
<text x="550.9" y="466.2" text-anchor="middle" class="al">13/05/2025</text>
<text x="601" y="466.2" text-anchor="middle" class="al">05/06/2025</text>
<text x="650.9" y="466.2" text-anchor="middle" class="al">28/06/2025</text>
<text x="701.3" y="466.2" text-anchor="middle" class="al">21/07/2025</text>
<text x="751.7" y="466.2" text-anchor="middle" class="al">13/08/2025</text>
<text x="801.8" y="466.2" text-anchor="middle" class="al">05/09/2025</text>
<text x="851.8" y="466.2" text-anchor="middle" class="al">28/09/2025</text>
<text x="947.6" y="466.2" text-anchor="end" class="al">11/11/2025</text>
<text x="511.4" y="475.6" text-anchor="middle" class="at" style="letter-spacing:-.15px">Date</text>
<text transform="translate(18.8 350.7) rotate(-90)" text-anchor="middle" class="at" style="letter-spacing:-.27px">Cumulative profit ($)</text>
</svg>
</div>
</body></html>
